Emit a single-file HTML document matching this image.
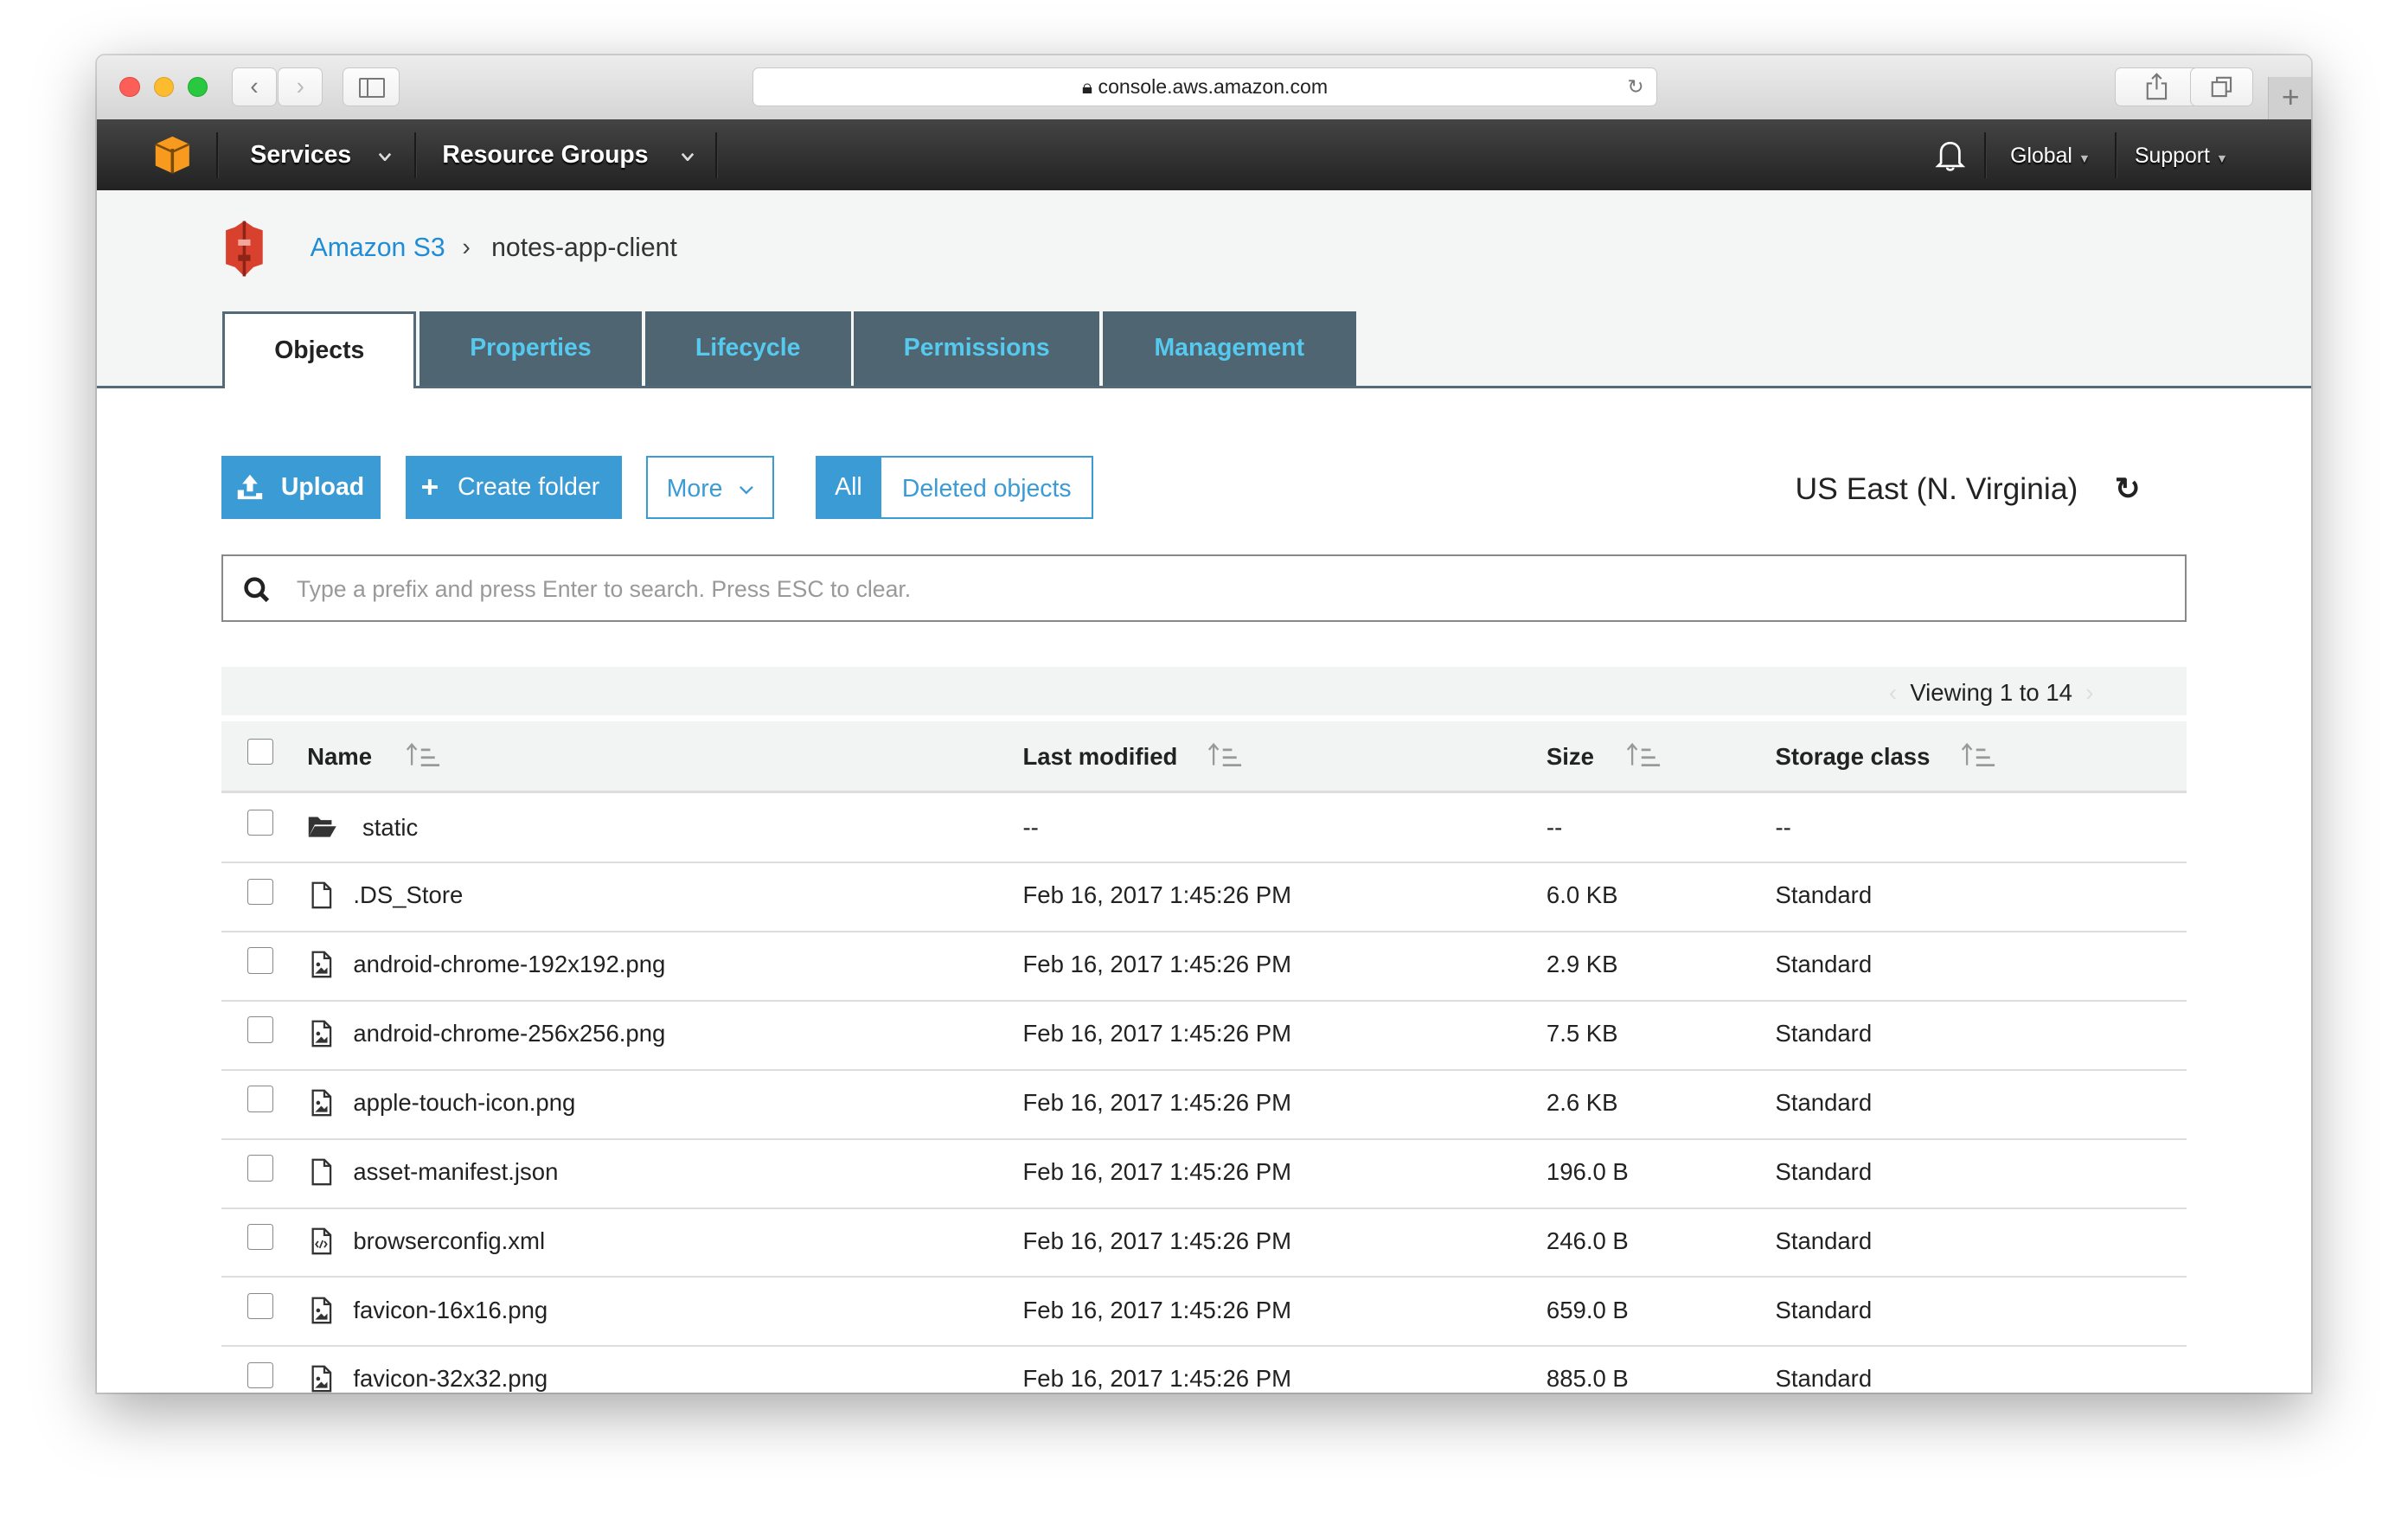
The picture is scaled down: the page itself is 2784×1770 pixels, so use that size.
<!DOCTYPE html>
<html><head><meta charset="utf-8"><style>
html,body{margin:0;padding:0;background:#fff;overflow:hidden}
#root{width:1568px;height:997px;position:relative;zoom:1.77551;font-family:"Liberation Sans",Arial,sans-serif;color:#222;background:#fff}
.abs{position:absolute}
#win{left:63px;top:36px;width:1442px;height:871px;background:#fff;box-shadow:0 12px 40px rgba(0,0,0,.35),0 0 0 1px rgba(0,0,0,.15);border-radius:5px 5px 0 0;overflow:hidden}
#title{left:0;top:0;width:1442px;height:42px;background:linear-gradient(#ececec,#d5d5d5);border-bottom:1px solid #b8b8b8}
.dot{width:12px;height:12px;border-radius:50%;top:14px}
.tb{background:linear-gradient(#fdfdfd,#f0f0f0);border:1px solid #c8c8c8;border-radius:4px;height:24px;top:8px}
#nav{left:0;top:42px;width:1442px;height:46px;background:linear-gradient(#444,#222)}
.nv{color:#fff;font-weight:bold;font-size:16px;top:14px;text-shadow:0 1px 1px #000;white-space:nowrap}
.sep{width:1px;height:30px;top:8px;background:#1a1a1a;border-right:1px solid #3c3c3c}
#hdr{left:0;top:88px;width:1442px;height:127px;background:#f4f5f5;border-bottom:2px solid #546a78}
.tab{top:79px;height:48px;background:#4f6572;color:#56c9ee;font-weight:bold;font-size:16px;text-align:center;line-height:48px}
.btn{top:261px;height:41px;line-height:41px;font-size:16px;color:#fff;background:#3a9bd5;box-sizing:border-box}
.btno{background:#fff;color:#3a9bd5;border:1.5px solid #3a9bd5}
.row{left:81px;width:1280px;height:45px;border-bottom:1.5px solid #ddd;font-size:15.5px}
.row span{position:absolute;top:14px;white-space:nowrap}
.cb{position:absolute;left:17px;top:11px;width:16px;height:16px;border:1px solid #888;border-radius:2px;background:#fff}
.hd{font-weight:bold;font-size:15.5px}
.sort{position:absolute;top:13px}
</style></head><body><div id="root">
<div id="win" class="abs">
 <div id="title" class="abs">
  <div class="abs dot" style="left:15px;background:#fc5f57;border:1px solid #de4a41"></div>
  <div class="abs dot" style="left:37px;background:#fdbc2e;border:1px solid #dea123"></div>
  <div class="abs dot" style="left:59px;background:#28c840;border:1px solid #1aab29"></div>
  <div class="abs tb" style="left:88px;width:28px;color:#777;text-align:center;line-height:24px">&#x2039;</div>
  <div class="abs tb" style="left:118px;width:28px;color:#bbb;text-align:center;line-height:24px">&#x203A;</div>
  <div class="abs tb" style="left:160px;width:36px"><div class="abs" style="left:10px;top:6px;width:15px;height:11px;border:1.5px solid #777;border-radius:1px"></div><div class="abs" style="left:15px;top:6px;width:1.5px;height:13px;background:#777"></div></div>
  <div class="abs tb" style="left:427px;width:588px;background:#fff;text-align:center;font-size:13px;line-height:24px;color:#222">&#x1F512;&#xFE0E; console.aws.amazon.com<span style="position:absolute;right:8px;color:#777">&#x21BB;</span></div>
  <div class="abs tb" style="left:1314px;width:54px;text-align:center;color:#777;line-height:24px">
   <svg width="14" height="18" viewBox="0 0 14 18" style="margin-top:3px"><path d="M7 1 L7 11 M4 4 L7 1 L10 4 M4 7 L1 7 L1 17 L13 17 L13 7 L10 7" stroke="#777" stroke-width="1.2" fill="none"/></svg></div>
  <div class="abs tb" style="left:1363px;width:40px;text-align:center;line-height:24px"><svg width="14" height="14" viewBox="0 0 14 14" style="margin-top:5px"><rect x="1" y="4" width="9" height="9" stroke="#777" fill="none" stroke-width="1.2"/><path d="M4 4 L4 1 L13 1 L13 10 L10 10" stroke="#777" fill="none" stroke-width="1.2"/></svg></div>
  <div class="abs" style="left:1414px;top:14px;width:28px;height:28px;background:#d0d0d0;border-left:1px solid #bbb;color:#777;text-align:center;font-size:20px;line-height:26px">+</div>
 </div>
 <div id="nav" class="abs">
  <svg class="abs" style="left:37px;top:10px" width="24" height="26" viewBox="0 0 24 26"><path d="M12 1 L23 6 L23 20 L12 25 L1 20 L1 6Z" fill="#f89a1e"/><path d="M12 9 L12 25" stroke="#7a4a0a" stroke-width="2"/><path d="M1 6 L12 11 L23 6" stroke="#7a4a0a" stroke-width="1.5" fill="none"/></svg>
  <div class="abs sep" style="left:78px"></div>
  <div class="abs nv" style="left:100px">Services</div>
  <svg class="abs" style="left:183px;top:21px" width="9" height="6" viewBox="0 0 9 6"><path d="M1 1 L4.5 5 L8 1" stroke="#ddd" stroke-width="1.5" fill="none"/></svg>
  <div class="abs sep" style="left:207px"></div>
  <div class="abs nv" style="left:225px">Resource Groups</div>
  <svg class="abs" style="left:380px;top:21px" width="9" height="6" viewBox="0 0 9 6"><path d="M1 1 L4.5 5 L8 1" stroke="#ddd" stroke-width="1.5" fill="none"/></svg>
  <div class="abs sep" style="left:403px"></div>
  <svg class="abs" style="left:1197px;top:12px" width="20" height="22" viewBox="0 0 20 22"><path d="M4 16 L4 9 C4 5 7 3 10 3 C13 3 16 5 16 9 L16 16 L18 18 L2 18 L4 16Z M8 19 C8 21 12 21 12 19" stroke="#fff" stroke-width="1.5" fill="none"/></svg>
  <div class="abs sep" style="left:1229px"></div>
  <div class="abs nv" style="left:1246px;font-size:14px;font-weight:normal;top:16px">Global <span style="font-size:8px;color:#bbb">&#x25BC;</span></div>
  <div class="abs sep" style="left:1314px"></div>
  <div class="abs nv" style="left:1327px;font-size:14px;font-weight:normal;top:16px">Support <span style="font-size:8px;color:#bbb">&#x25BC;</span></div>
 </div>
 <div id="hdr" class="abs">
  <svg class="abs" style="left:80px;top:18px" width="32" height="40" viewBox="0 0 32 40"><path d="M16 2 L22 6 L28 8 L28 30 L22 32 L16 38 L10 32 L4 30 L4 8 L10 6Z" fill="#d9412f"/><path d="M16 2 L16 38" stroke="#8e2417" stroke-width="2"/><rect x="12" y="14" width="8" height="4" fill="#f2a79c"/><rect x="12" y="24" width="8" height="4" fill="#8e2417"/></svg>
  <div class="abs" style="left:139px;top:28px;font-size:17px;color:#1f8dd6">Amazon S3</div>
  <div class="abs" style="left:238px;top:28px;font-size:16px;color:#444">&#x203A;</div>
  <div class="abs" style="left:257px;top:28px;font-size:17px;color:#333">notes-app-client</div>
  <div class="abs" style="left:82px;top:79px;width:126px;height:50px;background:#fff;border:2px solid #546a78;border-bottom:none;box-sizing:border-box;text-align:center;line-height:48px;font-weight:bold;font-size:16px;color:#222">Objects</div>
  <div class="abs tab" style="left:210px;width:145px">Properties</div>
  <div class="abs tab" style="left:357px;width:134px">Lifecycle</div>
  <div class="abs tab" style="left:493px;width:160px">Permissions</div>
  <div class="abs tab" style="left:655px;width:165px">Management</div>
 </div>
 <div class="abs btn" style="left:81px;width:104px"><svg style="position:absolute;left:10px;top:11px" width="18" height="18" viewBox="0 0 18 18"><path d="M9 1 L14 7 L11 7 L11 12 L7 12 L7 7 L4 7Z M1 11 L1 17 L17 17 L17 13 L13 13 L13 15 L5 15 L5 11Z" fill="#fff"/></svg><span style="position:absolute;left:39px;font-weight:bold;font-size:16px">Upload</span></div>
 <div class="abs btn" style="left:201px;width:141px"><span style="position:absolute;left:10px;font-weight:bold;font-size:20px">+</span><span style="position:absolute;left:34px;font-size:16px">Create folder</span></div>
 <div class="abs btn btno" style="left:358px;width:83px;padding-left:12px">More <svg width="10" height="6" viewBox="0 0 10 6" style="margin-left:6px;vertical-align:middle"><path d="M1 1 L5 5 L9 1" stroke="#3a9bd5" stroke-width="1.3" fill="none"/></svg></div>
 <div class="abs btn" style="left:468px;width:43px;text-align:center">All</div>
 <div class="abs btn btno" style="left:510px;width:139px;text-align:center">Deleted objects</div>
 <div class="abs" style="left:1106px;top:271px;font-size:20px;color:#222">US East (N. Virginia)</div>
 <div class="abs" style="left:1314px;top:271px;font-size:20px;font-weight:bold;color:#222">&#x21BB;</div>
 <div class="abs" style="left:81px;top:325px;width:1280px;height:44px;border:1.5px solid #888;box-sizing:border-box">
  <svg class="abs" style="left:13px;top:13px" width="18" height="18" viewBox="0 0 18 18"><circle cx="7.5" cy="7.5" r="5.5" stroke="#222" stroke-width="2.5" fill="none"/><path d="M11.5 11.5 L16 16" stroke="#222" stroke-width="2.8"/></svg>
  <div class="abs" style="left:48px;top:13px;font-size:15px;color:#999">Type a prefix and press Enter to search. Press ESC to clear.</div>
 </div>
 <div class="abs" style="left:81px;top:398px;width:1280px;height:32px;background:#f2f3f3"><span class="abs" style="left:1086px;top:8px;font-size:15.5px;color:#222;white-space:nowrap"><span style="color:#ddd">&#x2039;</span>&nbsp;&nbsp;Viewing 1 to 14&nbsp;&nbsp;<span style="color:#ddd">&#x203A;</span></span></div>
 <div class="abs row" style="top:434px;background:#f2f3f3;border-bottom:2px solid #ddd">
  <div class="cb" style="top:11px"></div>
  <span class="hd" style="left:56px">Name</span>
  <span class="hd" style="left:522px">Last modified</span>
  <span class="hd" style="left:863px">Size</span>
  <span class="hd" style="left:1012px">Storage class</span>
  <svg class="sort" style="left:120px" width="24" height="16" viewBox="0 0 24 16"><path d="M4 15 L4 2 M1 5 L4 1.5 L7 5" stroke="#999" stroke-width="1.3" fill="none"/><path d="M10 5 L16 5 M10 10 L19 10 M10 15 L22 15" stroke="#999" stroke-width="1.6"/></svg>
  <svg class="sort" style="left:642px" width="24" height="16" viewBox="0 0 24 16"><path d="M4 15 L4 2 M1 5 L4 1.5 L7 5" stroke="#999" stroke-width="1.3" fill="none"/><path d="M10 5 L16 5 M10 10 L19 10 M10 15 L22 15" stroke="#999" stroke-width="1.6"/></svg>
  <svg class="sort" style="left:915px" width="24" height="16" viewBox="0 0 24 16"><path d="M4 15 L4 2 M1 5 L4 1.5 L7 5" stroke="#999" stroke-width="1.3" fill="none"/><path d="M10 5 L16 5 M10 10 L19 10 M10 15 L22 15" stroke="#999" stroke-width="1.6"/></svg>
  <svg class="sort" style="left:1133px" width="24" height="16" viewBox="0 0 24 16"><path d="M4 15 L4 2 M1 5 L4 1.5 L7 5" stroke="#999" stroke-width="1.3" fill="none"/><path d="M10 5 L16 5 M10 10 L19 10 M10 15 L22 15" stroke="#999" stroke-width="1.6"/></svg>
 </div>
 <div class="abs row" style="top:480px"><div class="cb"></div><svg class="abs" style="left:56px;top:14px" width="20" height="16" viewBox="0 0 20 16"><path d="M1 2 L7 2 L9 4 L16 4 L16 7 L5 7 L1 15Z M5 8 L19 8 L15 15 L1 15Z" fill="#333"/></svg><span style="left:92px;top:14px">static</span><span style="left:522px;top:14px">--</span><span style="left:863px;top:14px">--</span><span style="left:1012px;top:14px">--</span></div>
 <div id="rows"></div>
</div>
</div>
<script>
var d=[["doc",".DS_Store","6.0 KB"],["img","android-chrome-192x192.png","2.9 KB"],["img","android-chrome-256x256.png","7.5 KB"],["img","apple-touch-icon.png","2.6 KB"],["doc","asset-manifest.json","196.0 B"],["xml","browserconfig.xml","246.0 B"],["img","favicon-16x16.png","659.0 B"],["img","favicon-32x32.png","885.0 B"]];
var h="";
d.forEach(function(r,i){
var ic='<path d="M1.5 1 L9 1 L13 5 L13 17 L1.5 17Z M9 1 L9 5 L13 5" stroke="#333" stroke-width="1.3" fill="none"/>';
if(r[0]=="img")ic+='<circle cx="5" cy="9" r="1.3" fill="#333"/><path d="M3 15 L7 11 L9 13 L11 11 L11 15Z" fill="#333"/>';
if(r[0]=="xml")ic+='<path d="M5 9 L3.5 11 L5 13 M9 9 L10.5 11 L9 13 M8 8.5 L6 13.5" stroke="#333" stroke-width="1" fill="none"/>';
h+='<div class="abs row" style="top:'+(525+45*i)+'px"><div class="cb"></div><svg class="abs" style="left:58px;top:13px" width="15" height="19" viewBox="0 0 15 19">'+ic+'</svg><span style="left:86px;top:13px">'+r[1]+'</span><span style="left:522px;top:13px">Feb 16, 2017 1:45:26 PM</span><span style="left:863px;top:13px">'+r[2]+'</span><span style="left:1012px;top:13px">Standard</span></div>';
});
document.getElementById("rows").outerHTML=h;
</script>
</body></html>
